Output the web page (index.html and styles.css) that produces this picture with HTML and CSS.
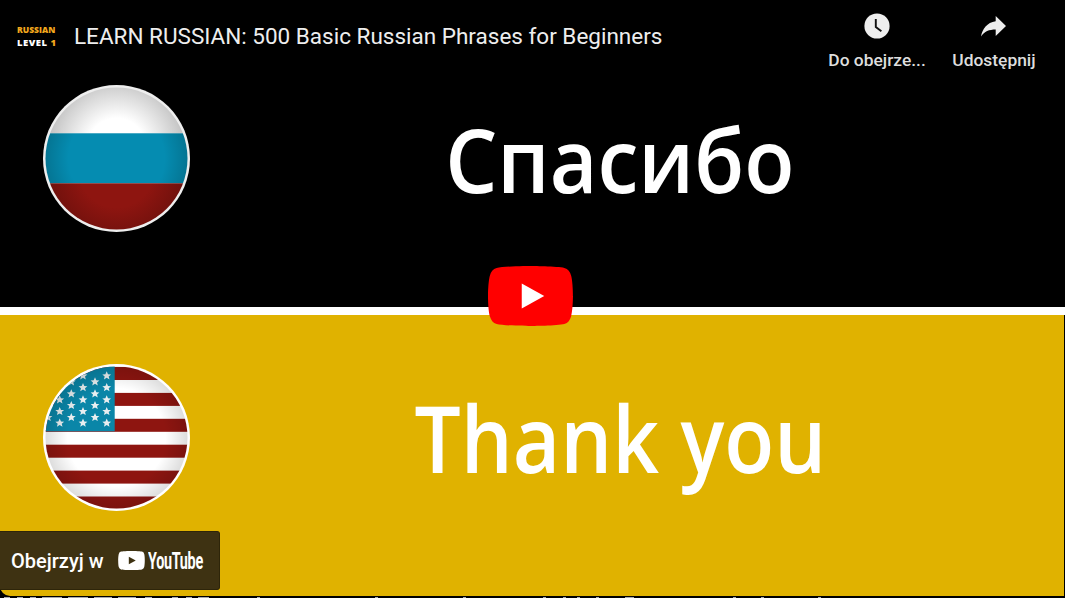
FILE: index.html
```html
<!DOCTYPE html>
<html lang="en">
<head>
    <meta charset="UTF-8">
    <title>LEARN RUSSIAN: 500 Basic Russian Phrases for Beginners</title>
    <link rel="stylesheet" href="styles.css">
</head>
<body>

    <div class="player">

        <section class="panel panel-top">
            <header class="topbar">
                <div class="channel">
                    <span class="channel-first">RUSSIAN</span>
                    <span class="channel-second">LEVEL <span class="channel-orange">1</span></span>
                </div>
                <h1 class="title">LEARN RUSSIAN: 500 Basic Russian Phrases for Beginners</h1>
                <div class="action action-watch">
                    <svg class="action-icon" viewBox="0 0 26 26" width="26" height="26">
                        <circle cx="13" cy="13" r="12.6" fill="#eee"/>
                        <path d="M11.8 6v8l5.6 4.2" fill="none" stroke="#111" stroke-width="1.9"/>
                    </svg>
                    <span class="action-label">Do obejrze...</span>
                </div>
                <div class="action action-share">
                    <svg class="action-icon" viewBox="0 0 26 26" width="26" height="26">
                        <path d="M14.7 8.200V3L25 13 14.700 23v-6.400C8 16.600 3.500 18.500 0 23.500 1.300 16 6 9.400 14.700 8.200z" fill="#eee"/>
                    </svg>
                    <span class="action-label">Udostępnij</span>
                </div>
            </header>
            <div class="phrase-row">
                <svg class="flag" viewBox="0 0 147 147" width="147" height="147">
                    <defs>
                        <clipPath id="ruClip"><circle cx="73.500" cy="73.500" r="71"/></clipPath>
                        <radialGradient id="ruWhite" gradientUnits="userSpaceOnUse" cx="73.500" cy="62" r="72">
                            <stop offset="0.4" stop-color="#fff"/>
                            <stop offset="1" stop-color="#bdbdbd"/>
                        </radialGradient>
                        <radialGradient id="ruBlue" gradientUnits="userSpaceOnUse" cx="73.500" cy="73.500" r="74">
                            <stop offset="0.65" stop-color="#058cb1"/>
                            <stop offset="1" stop-color="#05728f"/>
                        </radialGradient>
                        <radialGradient id="ruRed" gradientUnits="userSpaceOnUse" cx="73.500" cy="85" r="75">
                            <stop offset="0.5" stop-color="#8e1510"/>
                            <stop offset="1" stop-color="#6a100c"/>
                        </radialGradient>
                    </defs>
                    <circle cx="73.500" cy="73.500" r="73.500" fill="#eee"/>
                    <g clip-path="url(#ruClip)">
                        <rect width="147" height="48.300" fill="url(#ruWhite)"/>
                        <rect y="48.300" width="147" height="50" fill="url(#ruBlue)"/>
                        <rect y="98.300" width="147" height="49" fill="url(#ruRed)"/>
                    </g>
                </svg>
                <p class="phrase"><span class="phrase-text phrase-ru">Спасибо</span></p>
            </div>
        </section>

        <section class="panel panel-bottom">
            <div class="phrase-row">
                <svg class="flag" viewBox="0 0 147 147" width="147" height="147">
                    <defs>
                        <clipPath id="usClip"><circle cx="73.500" cy="73.500" r="71"/></clipPath>
                        <radialGradient id="usShade" gradientUnits="userSpaceOnUse" cx="73.500" cy="73.500" r="72">
                            <stop offset="0.68" stop-color="#000" stop-opacity="0"/>
                            <stop offset="1" stop-color="#000" stop-opacity="0.14"/>
                        </radialGradient>
                        <polygon id="star" points="0,-4.400 1.300,-1.400 4.400,-1.300 2,0.700 2.800,3.800 0,2.100 -2.800,3.800 -2,0.700 -4.400,-1.300 -1.300,-1.400"/>
                    </defs>
                    <circle cx="73.500" cy="73.500" r="73.500" fill="#fff"/>
                    <g clip-path="url(#usClip)">
                        <rect width="147" height="147" fill="#fff"/>
                        <rect y="3" width="147" height="13" fill="#8e1510"/>
                        <rect y="28.900" width="147" height="13" fill="#8e1510"/>
                        <rect y="54.800" width="147" height="13" fill="#8e1510"/>
                        <rect y="80.700" width="147" height="13" fill="#8e1510"/>
                        <rect y="106.600" width="147" height="13" fill="#8e1510"/>
                        <rect y="132.500" width="147" height="13" fill="#8e1510"/>
                        <rect width="71.700" height="67.300" fill="#0a86a8"/>
                        <g fill="#e8eef0">
                            <use href="#star" x="40" y="11.700"/>
                            <use href="#star" x="63.700" y="11.700"/>
                            <use href="#star" x="28.300" y="17.700"/>
                            <use href="#star" x="52" y="17.700"/>
                            <use href="#star" x="40" y="23.500"/>
                            <use href="#star" x="63.700" y="23.500"/>
                            <use href="#star" x="28.300" y="29.700"/>
                            <use href="#star" x="52" y="29.700"/>
                            <use href="#star" x="16.700" y="35.700"/>
                            <use href="#star" x="40" y="35.700"/>
                            <use href="#star" x="63.700" y="35.700"/>
                            <use href="#star" x="28.300" y="41.300"/>
                            <use href="#star" x="52" y="41.300"/>
                            <use href="#star" x="16.700" y="47.300"/>
                            <use href="#star" x="40" y="47.300"/>
                            <use href="#star" x="63.700" y="47.300"/>
                            <use href="#star" x="5" y="53.300"/>
                            <use href="#star" x="28.300" y="53.300"/>
                            <use href="#star" x="52" y="53.300"/>
                            <use href="#star" x="16.700" y="59"/>
                            <use href="#star" x="40" y="59"/>
                            <use href="#star" x="63.700" y="59"/>
                        </g>
                        <rect width="147" height="147" fill="url(#usShade)"/>
                    </g>
                </svg>
                <p class="phrase"><span class="phrase-text phrase-en">Thank you</span></p>
            </div>
        </section>

        <div class="caption-edge"></div>

        <!-- play button sits over the two panels -->
        <svg class="play" viewBox="0 0 68 48" width="85" height="60">
            <path d="M66.520 7.740c-.78-2.930-2.490-5.410-5.420-6.190C55.790.13 34 0 34 0S12.210.13 6.900 1.550C3.970 2.330 2.270 4.810 1.480 7.740.06 13.050 0 24 0 24s.06 10.950 1.480 16.260c.78 2.930 2.490 5.410 5.420 6.190C12.210 47.870 34 48 34 48s21.790-.13 27.100-1.550c2.930-.78 4.640-3.260 5.420-6.190C67.940 34.950 68 24 68 24s-.06-10.950-1.480-16.260z" fill="#f00"/>
            <path d="M45 24 27 14v20z" fill="#fff"/>
        </svg>

        <div class="watch-on">
            <span class="watch-text">Obejrzyj w</span>
            <svg class="yt-icon" viewBox="0 0 28 20" width="27" height="19">
                <path d="M27.400 3.100A3.500 3.500 0 0 0 25 .6C22.800 0 14 0 14 0S5.200 0 3 .6A3.500 3.500 0 0 0 .6 3.100C0 5.300 0 10 0 10s0 4.700.6 6.900A3.500 3.500 0 0 0 3 19.400C5.200 20 14 20 14 20s8.800 0 11-.6a3.500 3.500 0 0 0 2.400-2.500C28 14.700 28 10 28 10s0-4.700-.6-6.900z" fill="#fff"/>
                <path d="M11.200 14 18.500 10l-7.300-4z" fill="#3e3212"/>
            </svg>
            <span class="yt-word"><span class="yt-word-inner">YouTube</span></span>
        </div>

    </div>

</body>
</html>
```

FILE: styles.css
```css
body {
    margin: 0;
    background-color: #000;
    overflow: hidden;
}
.player {
    position: relative;
    width: 1065px;
    height: 598px;
    font-family: 'Roboto', sans-serif;
}
.panel {
    box-sizing: border-box;
}
.panel-top {
    height: 315px;
    background-color: #000;
    border-bottom: 8px solid #fff;
}
.panel-bottom {
    height: 281px;
    padding-top: 49px;
    margin-right: 1px;
    background-color: #e0b200;
    border-bottom-left-radius: 10px;
}
.topbar {
    display: flex;
    align-items: flex-start;
    height: 85px;
    box-sizing: border-box;
    padding-left: 17px;
}
.channel {
    display: flex;
    flex-direction: column;
    width: 57px;
    padding-top: 23px;
    font-family: 'Open Sans', sans-serif;
    font-weight: 800;
    line-height: 13px;
    color: #fff;
}
.channel-first {
    font-size: 8.500px;
    color: #f2a81d;
}
.channel-second {
    font-size: 9.500px;
    letter-spacing: 0.5px;
}
.channel-orange {
    color: #f2a81d;
}
.title {
    flex: 1;
    margin: 23px 0 0;
    font-size: 22.500px;
    font-weight: 400;
    line-height: 26px;
    color: #eee;
    white-space: nowrap;
}
.action {
    display: flex;
    flex-direction: column;
    align-items: center;
    padding-top: 13px;
}
.action-watch {
    width: 100px;
}
.action-share {
    width: 90px;
    margin: 0 26px 0 22px;
}
.action-label {
    margin-top: 9px;
    font-size: 17.400px;
    font-weight: 500;
    line-height: 24px;
    color: #ddd;
    white-space: nowrap;
}
.phrase-row {
    display: flex;
    align-items: center;
    padding-left: 43px;
}
.flag {
    flex: none;
}
.phrase {
    flex: 1;
    margin: 0;
    padding-right: 16px;
    font-family: 'Open Sans', sans-serif;
    font-size: 92px;
    font-weight: 600;
    line-height: 110px;
    text-align: center;
    color: #fff;
}
/* the phrases in the video are narrower than the font */
.phrase-text {
    display: inline-block;
    transform: scaleX(0.89);
}
.phrase-ru {
    font-size: 89px;
    transform: scaleX(0.925);
}
.phrase-en {
    margin-left: 2px;
}
.caption-edge {
    height: 2px;
    background-color: #000;
    background-repeat: no-repeat;
    background-position: left bottom;
    background-size: 100% 1px;
    background-image: linear-gradient(to right,
        #000 4px, #aaa 4px, #aaa 10px, #000 10px, #000 17px, #aaa 17px, #aaa 23px, #000 23px,
        #000 30px, #aaa 30px, #aaa 36px, #000 36px, #000 42px, #aaa 42px, #aaa 62px, #000 62px,
        #000 68px, #aaa 68px, #aaa 88px, #000 88px, #000 94px, #aaa 94px, #aaa 112px, #000 112px,
        #000 118px, #aaa 118px, #aaa 136px, #000 136px, #000 145px, #aaa 145px, #aaa 152px, #000 152px,
        #000 172px, #aaa 172px, #aaa 178px, #000 178px, #000 186px, #aaa 186px, #aaa 192px, #000 192px,
        #000 198px, #aaa 198px, #aaa 209px, #000 209px,
        #000 257px, #aaa 257px, #aaa 260px, #000 260px, #000 375px, #aaa 375px, #aaa 378px, #000 378px,
        #000 463px, #aaa 463px, #aaa 466px, #000 466px, #000 543px, #aaa 543px, #aaa 546px, #000 546px,
        #000 563px, #aaa 563px, #aaa 566px, #000 566px, #000 577px, #aaa 577px, #aaa 580px, #000 580px,
        #000 596px, #aaa 596px, #aaa 599px, #000 599px, #000 625px, #aaa 625px, #aaa 634px, #000 634px,
        #000 733px, #aaa 733px, #aaa 736px, #000 736px, #000 761px, #aaa 761px, #aaa 764px, #000 764px,
        #000 818px, #aaa 818px, #aaa 821px, #000 821px);
}
.play {
    position: absolute;
    left: 488px;
    top: 266px;
}
.watch-on {
    position: absolute;
    left: 0;
    top: 531px;
    display: flex;
    align-items: center;
    box-sizing: border-box;
    width: 220px;
    height: 59px;
    padding-left: 11px;
    background-color: #3e3212;
    border: 1px solid #2e2509;
    border-left: none;
    border-radius: 0 3px 3px 0;
}
.watch-text {
    flex: none;
    width: 92px;
    font-size: 20px;
    font-weight: 500;
    color: #fff;
    white-space: nowrap;
}
.yt-icon {
    flex: none;
    margin-left: 15px;
}
.yt-word {
    flex: none;
    width: 54px;
    margin-left: 3px;
    font-size: 24px;
    font-weight: 700;
    letter-spacing: -0.5px;
    color: #fff;
    white-space: nowrap;
}
.yt-word-inner {
    display: inline-block;
    transform: scaleX(0.6);
    transform-origin: left center;
}
```
